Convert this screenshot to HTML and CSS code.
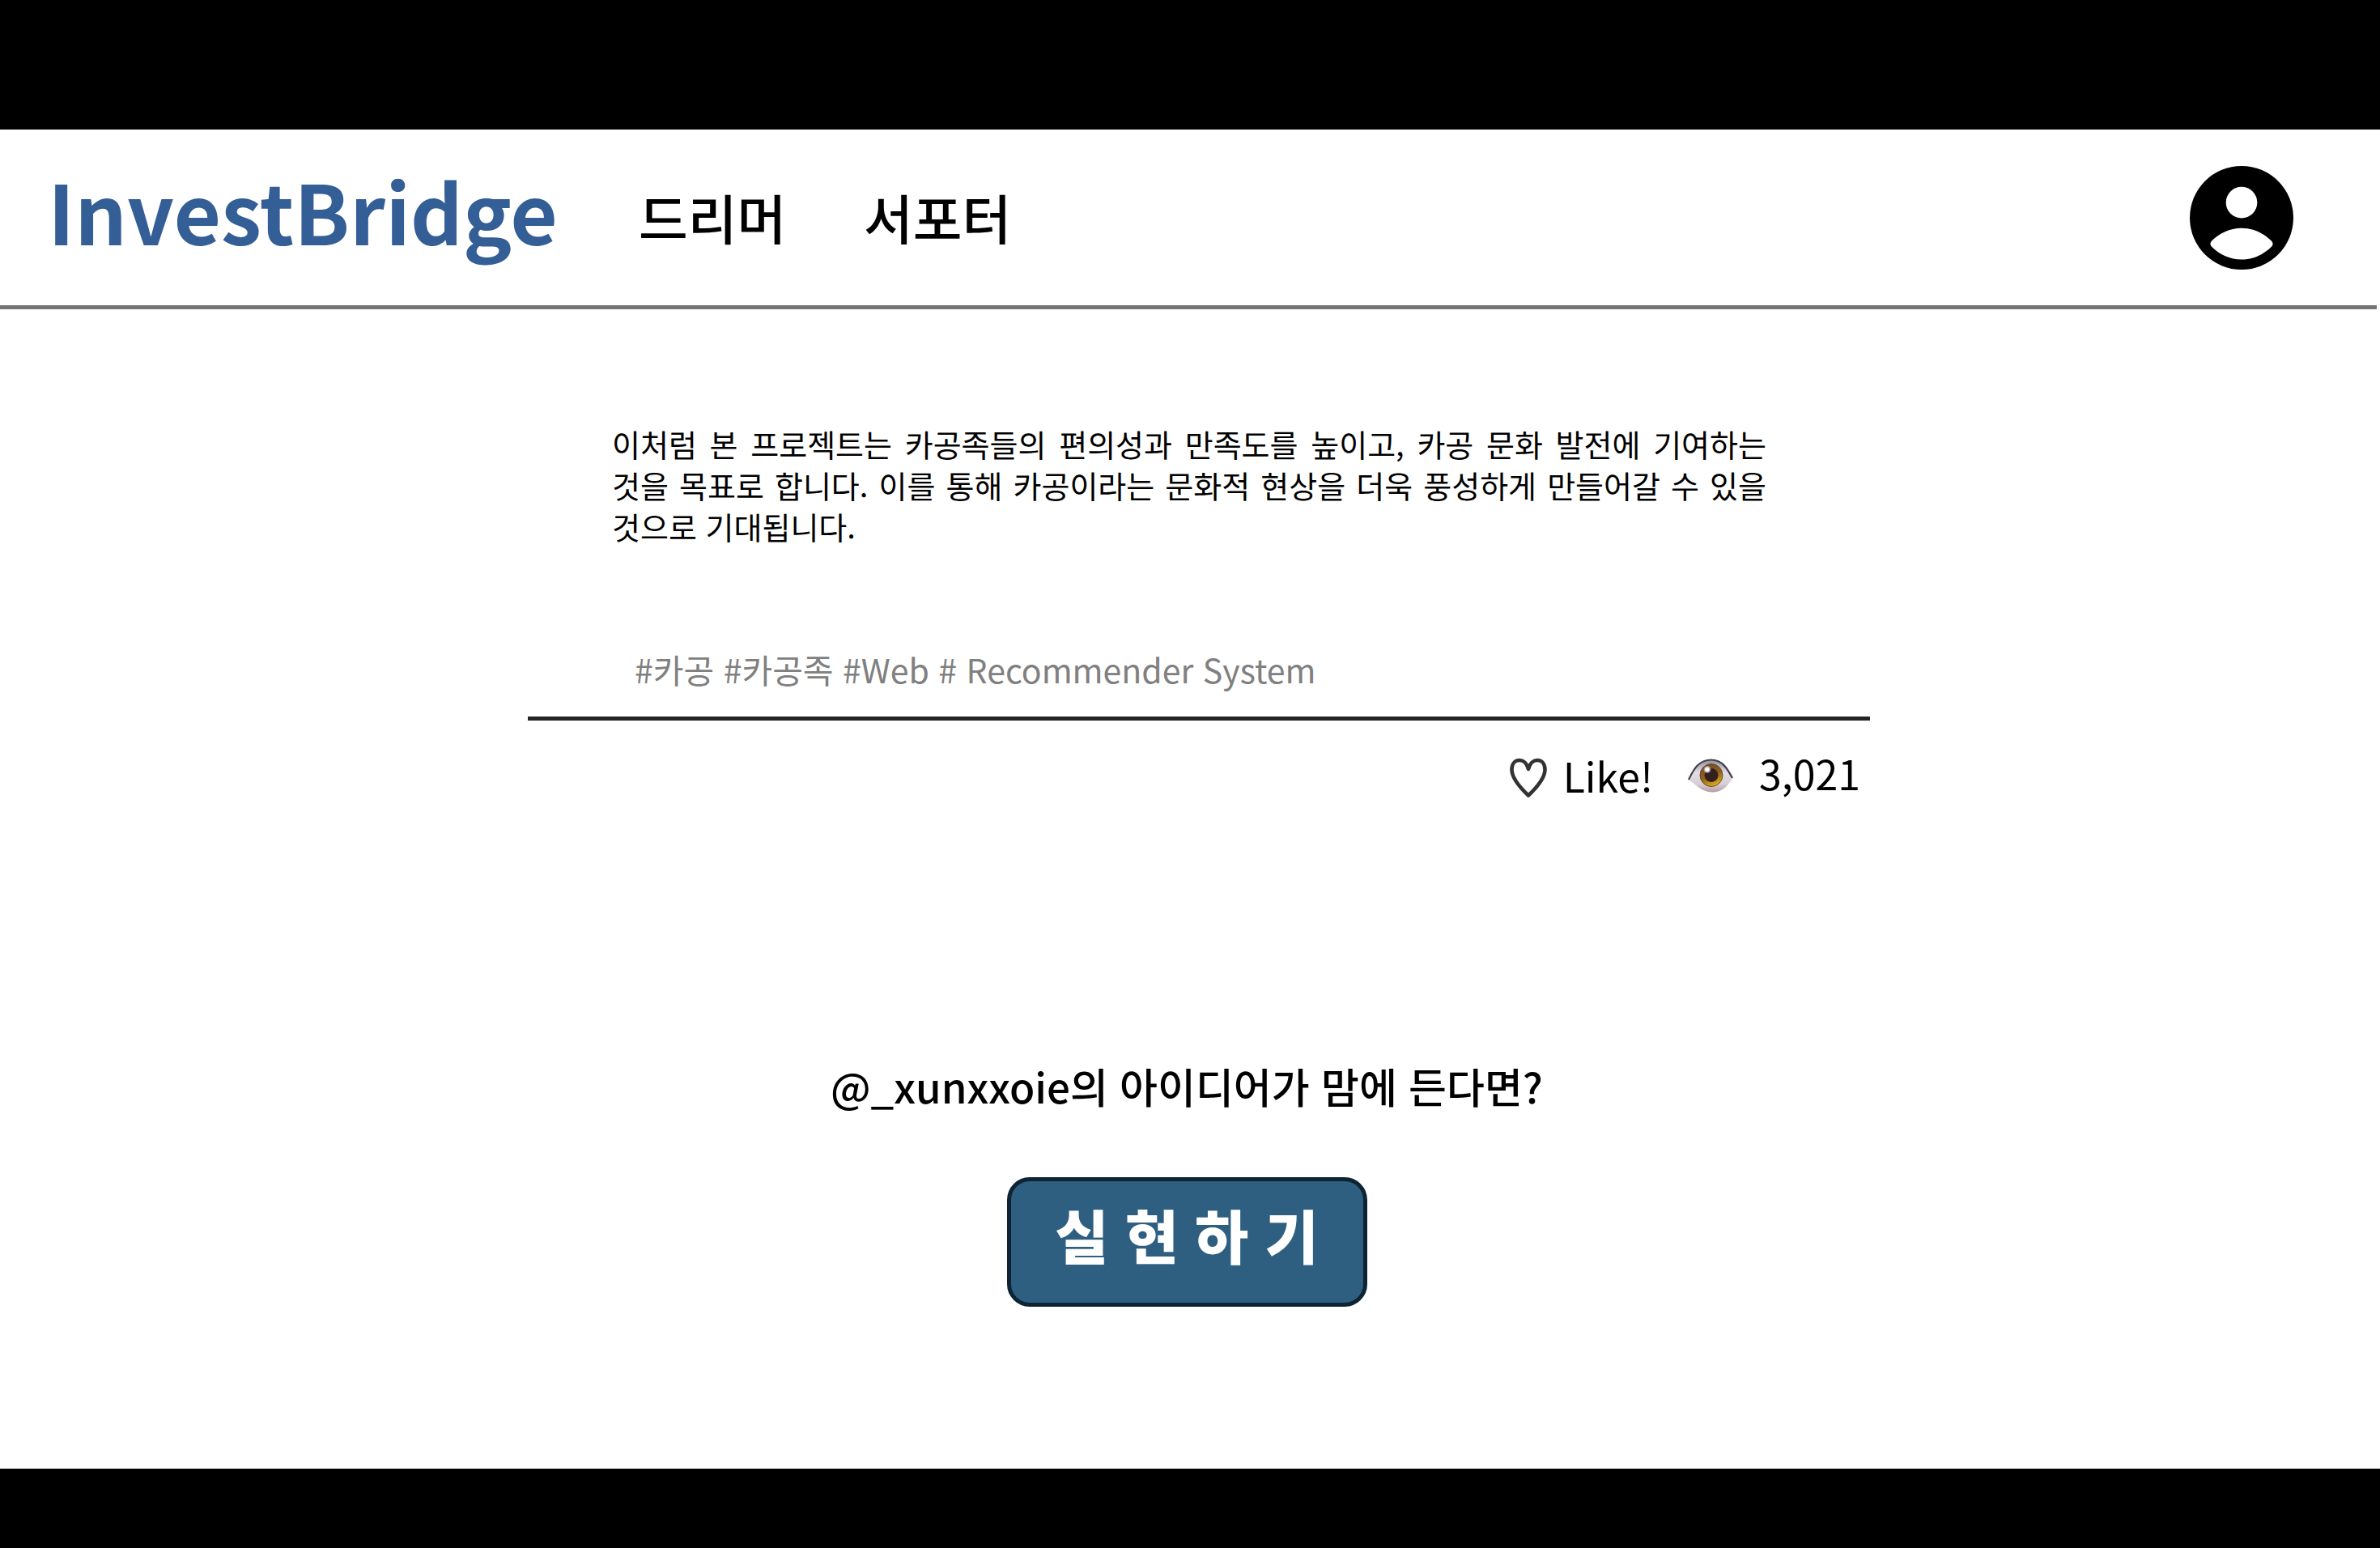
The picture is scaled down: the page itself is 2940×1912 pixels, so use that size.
FILE: index.html
```html
<!DOCTYPE html>
<html lang="ko">
<head>
<meta charset="utf-8">
<meta name="viewport" content="width=device-width, initial-scale=1">
<title>InvestBridge</title>
<link rel="stylesheet" href="styles.css">
</head>
<body>
<div class="page">
  <header class="header">
    <a class="logo" href="#">InvestBridge</a>
    <nav class="nav">
      <a href="#">드리머</a>
      <a href="#">서포터</a>
    </nav>
    <button class="account" type="button" aria-label="내 계정">
      <svg viewBox="2 2 20 20" aria-hidden="true">
        <circle cx="12" cy="12" r="10" fill="#000"/>
        <circle cx="12" cy="9.05" r="3.02" fill="#fff"/>
        <path fill="#fff" d="M12 14c-2.3 0-4.3 1-5.8 2.5-.3.35-.3.75 0 1.05C7.7 19.1 9.8 20.05 12 20.05s4.3-.95 5.8-2.5c.3-.3.3-.7 0-1.05C16.3 15 14.3 14 12 14z"/>
      </svg>
    </button>
  </header>
  <main>
    <article class="idea">
      <p class="summary">이처럼 본 프로젝트는 카공족들의 편의성과 만족도를 높이고, 카공 문화 발전에 기여하는 것을 목표로 합니다. 이를 통해 카공이라는 문화적 현상을 더욱 풍성하게 만들어갈 수 있을 것으로 기대됩니다.</p>
      <p class="tags">#카공 #카공족 #Web # Recommender System</p>
      <div class="stats">
        <button class="like" type="button">
          <svg class="heart" viewBox="0 0 46 50" aria-hidden="true">
            <path d="M23 14C21 6 16 3 12 3C6 3 2.500 8 2.500 14.500C2.500 25 13 37 23 46.500C33 37 43.500 25 43.500 14.500C43.500 8 40 3 34 3C30 3 25 6 23 14Z" fill="none" stroke="#333" stroke-width="4.600" stroke-linejoin="round"/>
          </svg>
          <span>Like!</span>
        </button>
        <span class="views">
          <svg class="eye" viewBox="0 0 56 42" role="img" aria-label="조회수">
            <defs>
              <linearGradient id="white" x1="0" y1="0" x2="0" y2="1">
                <stop offset="0" stop-color="#8f8a9c"/>
                <stop offset=".4" stop-color="#e2dde8"/>
                <stop offset=".75" stop-color="#d8ced4"/>
                <stop offset="1" stop-color="#b39da2"/>
              </linearGradient>
              <linearGradient id="iris" x1=".2" y1="0" x2=".6" y2="1">
                <stop offset="0" stop-color="#6b4a35"/>
                <stop offset=".55" stop-color="#8f621c"/>
                <stop offset="1" stop-color="#e0ae20"/>
              </linearGradient>
              <radialGradient id="shine">
                <stop offset=".4" stop-color="#fff"/>
                <stop offset="1" stop-color="#fff" stop-opacity="0"/>
              </radialGradient>
            </defs>
            <path d="M.5 26C6 16 12 1 29 1C43 1 49 13 55.500 23C50 34 42 41.500 30 41.500C17 41.500 9 31 .5 26Z" fill="url(#white)"/>
            <path d="M1 26C6 16 12 1.500 29 1.500C43 1.500 49 13 55 24" fill="none" stroke="#45414b" stroke-width="2.200"/>
            <circle cx="29" cy="20.500" r="14" fill="url(#iris)" stroke="#69491f" stroke-width="1"/>
            <circle cx="29" cy="20.500" r="8.500" fill="#35201f"/>
            <circle cx="24" cy="13.500" r="5" fill="url(#shine)"/>
          </svg>
          <span>3,021</span>
        </span>
      </div>
    </article>
    <section class="cta">
      <p class="question">@_xunxxoie의 아이디어가 맘에 든다면?</p>
      <button class="realize" type="button">실 현 하 기</button>
    </section>
  </main>
</div>
</body>
</html>
```
FILE: styles.css
```css
* {
  box-sizing: border-box;
}

body {
  margin: 0;
  background: #000;
  color: #000;
  font-family: "Noto Sans CJK KR", "Noto Sans", sans-serif;
}

p {
  margin: 0;
}

a {
  color: inherit;
  text-decoration: none;
}

button {
  border: 0;
  padding: 0;
  background: none;
  color: inherit;
  font: inherit;
  cursor: pointer;
}

svg {
  display: block;
}

.page {
  display: flex;
  flex-direction: column;
  min-height: 100vh;
  border: solid #000;
  border-width: 160px 0 98px;
  background: #fff;
}

.header {
  display: flex;
  align-items: center;
  height: 222px;
  margin-right: 4px;
  padding: 0 103px 0 59px;
  border-bottom: 5px solid #757575;
}

.logo {
  padding-bottom: 20px;
  color: #345e96;
  font-size: 101px;
  font-weight: 700;
  line-height: 112px;
}

.nav {
  display: flex;
  gap: 96px;
  margin-left: 100px;
  padding-bottom: 4px;
  font-size: 66px;
  font-weight: 500;
  line-height: 64px;
}

.account {
  width: 128px;
  height: 128px;
  margin-left: auto;
}

.idea {
  margin: 0 630px 0 652px;
  padding-top: 140px;
}

.summary {
  padding: 0 128px 0 104px;
  font-size: 38px;
  line-height: 51px;
  text-align: justify;
  word-break: keep-all;
}

.tags {
  margin-top: 125px;
  padding: 0 132px 33px;
  border-bottom: 5px solid #242424;
  color: #808080;
  font-size: 41px;
  line-height: 52px;
}

.stats {
  display: flex;
  align-items: flex-start;
  justify-content: flex-end;
  gap: 43px;
  margin-top: 38px;
  padding-right: 12px;
  font-size: 50px;
}

.like,
.views {
  display: flex;
  align-items: center;
}

.like {
  gap: 20px;
  line-height: 56px;
}

.views {
  gap: 32px;
  line-height: 52px;
}

.heart {
  width: 46px;
  height: 50px;
  margin-top: 8px;
}

.eye {
  width: 56px;
  height: 42px;
  margin-top: 8px;
}

.cta {
  display: flex;
  flex-direction: column;
  align-items: center;
  gap: 85px;
  padding: 327px 8px 0 0;
}

.question {
  font-size: 51px;
  font-weight: 500;
  line-height: 56px;
}

.realize {
  width: 445px;
  height: 160px;
  padding-bottom: 20px;
  border: 5px solid #0e2433;
  border-radius: 28px;
  background: #2e5f80;
  color: #fff;
  font-size: 72px;
  font-weight: 900;
  line-height: 80px;
}
```
